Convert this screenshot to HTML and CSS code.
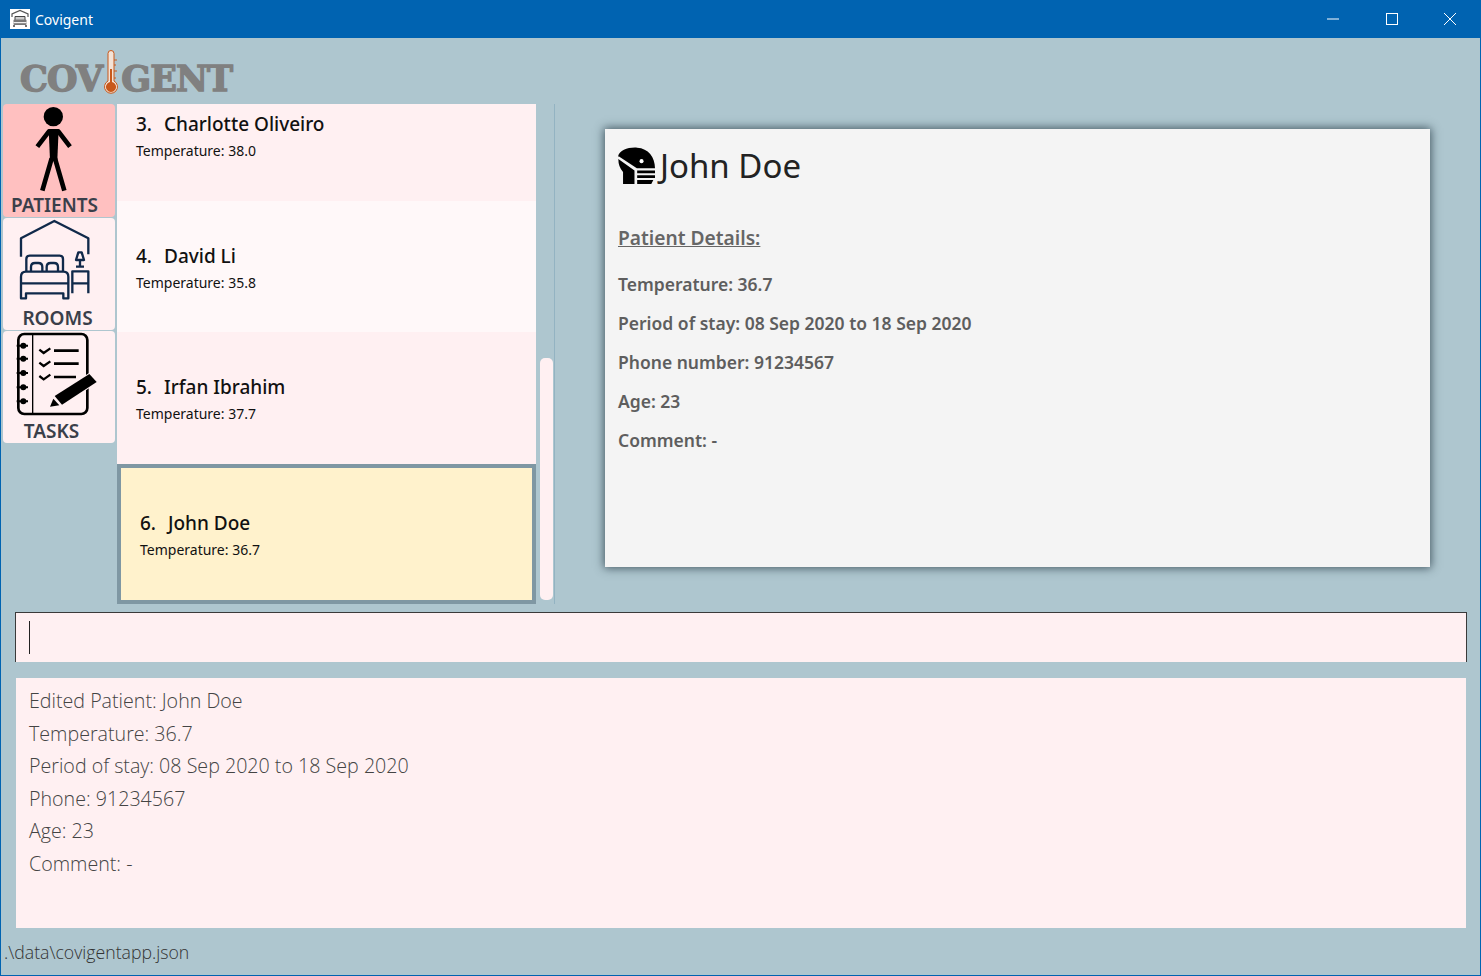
FILE: index.html
```html
<!DOCTYPE html>
<html>
  <head>
    <title>Covigent</title>
    <meta http-equiv="Content-Type" content="text/html; charset=UTF-8"/>
    <link rel="stylesheet" href="styles.css">
  </head>
  <body>
    <div class="window">
      <div class="titlebar">
        <svg class="app-icon" viewBox="0 0 20 20">
          <rect width="20" height="20" fill="#fff"/>
          <path d="M2 8V5l8-3.5L18 5v3" fill="none" stroke="#555" stroke-width="1.2"/>
          <path d="M5 11V7.500h10V11" fill="#ccc" stroke="#444"/>
          <rect x="3.500" y="10.500" width="13" height="5.500" rx="1" fill="#777"/>
          <rect x="3.500" y="13" width="13" height="1.200" fill="#eee"/>
          <path d="M4 16v2M16 16v2" stroke="#444" stroke-width="1.500"/>
        </svg>
        <span class="app-name">Covigent</span>
        <div class="win-buttons">
          <svg class="win-btn" viewBox="0 0 12 12"><path d="M0 6h12" stroke="#fff" fill="none"/></svg>
          <svg class="win-btn" viewBox="0 0 12 12"><rect x=".5" y=".5" width="11" height="11" stroke="#fff" fill="none"/></svg>
          <svg class="win-btn" viewBox="0 0 12 12"><path d="M0 0l12 12M12 0L0 12" stroke="#fff" fill="none"/></svg>
        </div>
      </div>

      <div class="logo">
        <span class="logo-text">COV</span>
        <svg class="logo-therm" viewBox="0 0 16 46">
          <path d="M5 3.500a3 3 0 0 1 6 0V31a6.500 6.500 0 1 1-6 0z" fill="#f4e3d6" stroke="#c8581a" stroke-width="1"/>
          <path d="M7 19h2v13a5 5 0 1 1-2 0z" fill="#c8581a"/>
          <path d="M11 10h3M11 15h2M11 21h3M11 28h2" stroke="#c8581a" stroke-width="1" fill="none"/>
        </svg>
        <span class="logo-text">GENT</span>
      </div>

      <div class="content">
        <div class="nav">
          <div class="nav-btn active">
            <svg class="nav-icon" viewBox="9 12 336 264">
              <circle cx="160" cy="50" r="29" fill="#000"/>
              <path d="M112 140l35-46h28l35 46" fill="none" stroke="#000" stroke-width="14" stroke-linejoin="round"/>
              <path d="M146 88h30l-4 92h-22z" fill="#000"/>
              <path d="M155 175l-28 97M165 175l28 97" fill="none" stroke="#000" stroke-width="14"/>
            </svg>
            <span class="nav-label label-patients">PATIENTS</span>
          </div>
          <div class="nav-btn">
            <svg class="nav-icon" viewBox="9 9 336 264">
              <g fill="none" stroke="#10294a" stroke-width="7" stroke-linejoin="round">
                <path d="M63 125V70L163 18l102 52v48"/>
                <path d="M79 170v-38q0-10 10-10h90q10 0 10 10v38"/>
                <path d="M93 170v-14q0-12 12-12h10q12 0 12 12v14M140 170v-14q0-12 12-12h10q12 0 12 12v14"/>
                <path d="M63 205v-20q0-15 15-15h112q15 0 15 15v20zM63 205v45h15v-15h112v15h15v-45"/>
                <path d="M217 235v-66h48v66M217 205h48"/>
                <path d="M228 135l7-23h10l7 23zM240 135v20M228 155h24"/>
              </g>
            </svg>
            <span class="nav-label label-rooms">ROOMS</span>
          </div>
          <div class="nav-btn">
            <svg class="nav-icon" viewBox="9 9 336 264">
              <g fill="none" stroke="#000">
                <rect x="55" y="18" width="207" height="240" rx="18" stroke-width="8"/>
                <path d="M98 18v240" stroke-width="4"/>
                <path d="M118 65l13 10 20-14M118 104l13 10 20-14M118 144l13 10 20-14" stroke-width="7"/>
                <path d="M162 68h74M162 107h74M162 147h66" stroke-width="8"/>
                <path d="M50 53h34M50 92h34M50 135h34M50 178h34M50 220h34" stroke-width="6"/>
              </g>
              <g fill="#000">
                <circle cx="70" cy="53" r="9"/><circle cx="70" cy="92" r="9"/><circle cx="70" cy="135" r="9"/><circle cx="70" cy="178" r="9"/><circle cx="70" cy="220" r="9"/>
                <path d="M268 138l22 24-104 68-22-26z" stroke="#fff0f2" stroke-width="6" paint-order="stroke"/>
                <path d="M160 212l18 20-28 4z"/>
              </g>
            </svg>
            <span class="nav-label label-tasks">TASKS</span>
          </div>
        </div>

        <div class="list">
          <div class="cell odd first">
            <div class="cell-name"><span class="cell-num">3.</span> Charlotte Oliveiro</div>
            <div class="cell-temp">Temperature: 38.0</div>
          </div>
          <div class="cell even">
            <div class="cell-name"><span class="cell-num">4.</span> David Li</div>
            <div class="cell-temp">Temperature: 35.8</div>
          </div>
          <div class="cell odd tall">
            <div class="cell-name"><span class="cell-num">5.</span> Irfan Ibrahim</div>
            <div class="cell-temp">Temperature: 37.7</div>
          </div>
          <div class="cell selected">
            <div class="cell-name"><span class="cell-num">6.</span> John Doe</div>
            <div class="cell-temp">Temperature: 36.7</div>
          </div>
        </div>

        <div class="scroll-track"><div class="scroll-thumb"></div></div>

        <div class="detail-pane">
          <div class="card">
            <div class="card-head">
              <svg class="mask-icon" viewBox="55 80 110 110">
                <path d="M55 108C60 90 85 80 112 82c33 2 53 28 53 61h-54L58 108z" fill="#000"/>
                <circle cx="125" cy="122" r="6" fill="#fff"/>
                <path d="M56 116l48 34v40H70v-36q-14-14-14-38zM112 150h53v8h-53zM112 164h53v8h-53zM112 178h48l-6 12h-42z" fill="#000"/>
              </svg>
              <span class="card-name">John Doe</span>
            </div>
            <div class="card-title">Patient Details:</div>
            <div class="card-row">Temperature: 36.7</div>
            <div class="card-row">Period of stay: 08 Sep 2020 to 18 Sep 2020</div>
            <div class="card-row">Phone number: 91234567</div>
            <div class="card-row">Age: 23</div>
            <div class="card-row">Comment: -</div>
          </div>
        </div>
      </div>

      <div class="command"><span class="caret"></span></div>

      <div class="result">
        <div>Edited Patient: John Doe</div>
        <div>Temperature: 36.7</div>
        <div>Period of stay: 08 Sep 2020 to 18 Sep 2020</div>
        <div>Phone: 91234567</div>
        <div>Age: 23</div>
        <div>Comment: -</div>
      </div>

      <div class="status">.\data\covigentapp.json</div>
    </div>
  </body>
</html>
```

FILE: styles.css
```css
html, body {
  margin: 0;
  padding: 0;
}
body {
  font-family: 'Noto Sans', 'Open Sans', sans-serif;
}

.window {
  box-sizing: border-box;
  width: 1481px;
  height: 976px;
  display: flex;
  flex-direction: column;
  overflow: hidden;
  background-color: #aec6cf;
  border: 1px solid #0063b1;
  border-top: none;
}

.titlebar {
  flex: none;
  height: 38px;
  display: flex;
  align-items: center;
  padding-left: 9px;
  background-color: #0063b1;
  color: #fff;
}
.app-icon {
  width: 20px;
  height: 20px;
}
.app-name {
  margin-left: 5px;
  font-size: 14px;
}
.win-buttons {
  margin-left: auto;
  display: flex;
  gap: 46.500px;
  padding-right: 24px;
}
.win-btn {
  width: 12px;
  height: 12px;
}

.logo {
  flex: none;
  height: 66px;
  display: flex;
  align-items: flex-end;
  padding-left: 19px;
  box-sizing: border-box;
  padding-bottom: 10px;
}
.logo-text {
  font-family: 'DejaVu Serif', serif;
  font-weight: bold;
  font-size: 35px;
  line-height: 30px;
  letter-spacing: -0.900px;
  color: #808080;
  -webkit-text-stroke: 1.4px #808080;
}
.logo-therm {
  width: 16px;
  height: 46px;
  margin: 0 2px -2px 1px;
}

.content {
  flex: none;
  height: 500px;
  display: flex;
  padding-left: 2px;
}

.nav {
  flex: none;
  width: 112px;
  margin-right: 2px;
  display: flex;
  flex-direction: column;
  gap: 1px;
}
.nav-btn {
  height: 112px;
  display: flex;
  flex-direction: column;
  align-items: center;
  border-radius: 4px;
  background-color: #fff0f2;
}
.nav-btn.active {
  height: 113px;
  background-color: #ffc0c0;
}
.nav-icon {
  flex: none;
  width: 112px;
  height: 88px;
}
.nav-label {
  font-size: 19px;
  line-height: 24px;
  font-weight: 600;
  color: #3a3f4a;
}
.label-patients { margin-right: 9px; margin-top: 1px; }
.label-rooms { margin-right: 3px; }
.label-tasks { margin-right: 15px; }

.list {
  flex: none;
  width: 419px;
  display: flex;
  flex-direction: column;
  justify-content: flex-end;
  overflow: hidden;
}
.cell {
  flex: none;
  box-sizing: border-box;
  height: 131px;
  padding: 2px 19px 0;
  display: flex;
  flex-direction: column;
  justify-content: center;
  color: #111;
}
.cell.first { padding-top: 0; }
.cell.odd { background-color: #fff0f2; }
.cell.even { background-color: #fff8f9; }
.cell.tall { height: 132px; }
.cell.selected {
  height: 140px;
  background-color: #fff2cc;
  border: 4px solid #7f97a3;
}
.cell-name {
  font-size: 19px;
  font-weight: 500;
  line-height: 26px;
}
.cell-num {
  margin-right: 7px;
}
.cell-temp {
  font-size: 14px;
  line-height: 20px;
  margin-top: 4px;
}

.scroll-track {
  flex: none;
  box-sizing: border-box;
  width: 19px;
  padding: 0 1px 4px 4px;
  display: flex;
  flex-direction: column;
  justify-content: flex-end;
  border-right: 1px solid #93b3c2;
}
.scroll-thumb {
  height: 242px;
  border-radius: 5px;
  background-color: #fff0f2;
}

.detail-pane {
  flex: 1;
  padding: 25px 50px 0;
}
.card {
  box-sizing: border-box;
  height: 438px;
  padding: 16px 13px;
  background-color: #f4f4f4;
  box-shadow: 0 0 9px 1px rgba(30, 50, 60, .75);
  color: #5e5e5e;
}
.card-head {
  display: flex;
  align-items: center;
  height: 40px;
}
.mask-icon {
  width: 37px;
  height: 37px;
}
.card-name {
  margin-left: 5px;
  font-size: 33px;
  color: #222;
}
.card-title {
  margin-top: 39px;
  font-size: 19.200px;
  font-weight: 600;
  line-height: 28px;
  text-decoration: underline;
  color: #666;
}
.card-row {
  margin-top: 13px;
  font-size: 17.500px;
  font-weight: 600;
  line-height: 26px;
}
.card-title + .card-row {
  margin-top: 19px;
}

.command {
  flex: none;
  box-sizing: border-box;
  height: 50px;
  margin: 8px 13px 0 14px;
  padding: 8px 13px 0;
  background-color: #fff0f2;
  border: 1px solid #3a3a3a;
  border-bottom: none;
}
.caret {
  display: block;
  width: 1px;
  height: 33px;
  background-color: #222;
}

.result {
  flex: none;
  box-sizing: border-box;
  height: 250px;
  margin: 16px 14px 0 15px;
  padding: 7px 13px;
  background-color: #fff0f2;
  font-family: 'Open Sans', 'Noto Sans', sans-serif;
  font-weight: 300;
  font-size: 19.650px;
  line-height: 32.600px;
  color: #444;
}

.status {
  flex: 1;
  display: flex;
  align-items: center;
  padding-left: 3px;
  font-family: 'Open Sans', 'Noto Sans', sans-serif;
  font-weight: 300;
  font-size: 17.700px;
  color: #333;
}
```
